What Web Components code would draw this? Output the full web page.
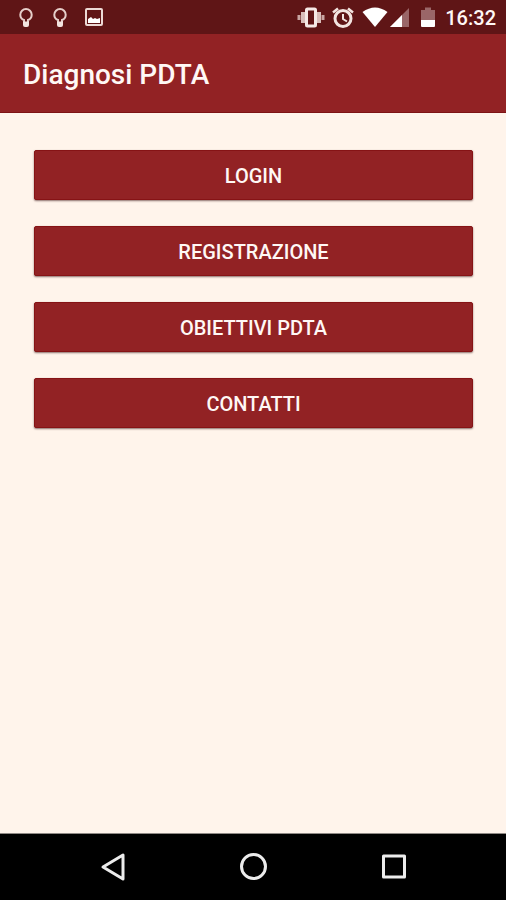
<!DOCTYPE html>
<html lang="it">
<head>
<meta charset="utf-8">
<meta name="viewport" content="width=device-width, initial-scale=1">
<title>Diagnosi PDTA</title>
<style>
  body {
    margin: 0;
    font-family: Roboto, "Liberation Sans", sans-serif;
    background: #fff4eb;
  }
</style>
</head>
<body>
<phone-screen>
  <status-bar slot="status" time="16:32"></status-bar>
  <app-bar slot="header">Diagnosi PDTA</app-bar>
  <menu-button>Login</menu-button>
  <menu-button>Registrazione</menu-button>
  <menu-button>Obiettivi PDTA</menu-button>
  <menu-button>Contatti</menu-button>
  <nav-bar slot="nav"></nav-bar>
</phone-screen>

<script>
const ICONS = {
  bulb: {
    width: 20,
    body: `<path d="M8 16.500v-2.500C5.500 13 4.300 11 4.300 8.700a5.700 5.700 0 0 1 11.400 0c0 2.300-1.200 4.300-3.700 5.300v2.500" fill="none" stroke="#e6cfca" stroke-width="2"/>
      <path d="M7 15.500h6V19q0 2-2 2H9q-2 0-2-2z" fill="#f3e4e0"/>`
  },
  picture: {
    width: 20,
    body: `<rect x="2" y="3" width="16" height="16" rx="1" fill="none" stroke="#ecd9d5" stroke-width="2"/>
      <path d="M4 17v-4l3-2 2 2 2-1 2 1 3-1v5z" fill="#fff"/>`
  },
  vibrate: {
    width: 28,
    body: `<rect x="9.500" y="3" width="9" height="17" rx="1" fill="none" stroke="#f6e9e6" stroke-width="3"/>
      <path d="M6 6v11M22 6v11" stroke="#d9bdb9" stroke-width="4"/>
      <path d="M2 9v5M26 9v5" stroke="#c9a5a2" stroke-width="3"/>`
  },
  alarm: {
    width: 24,
    body: `<circle cx="12" cy="12.500" r="8" fill="none" stroke="#f3e4e0" stroke-width="3"/>
      <path d="M2 6.500l5-4M22 6.500l-5-4" stroke="#f3e4e0" stroke-width="2.500"/>
      <path d="M12 8v5l4 2.500" fill="none" stroke="#f3e4e0" stroke-width="2"/>`
  },
  wifi: {
    width: 28,
    body: `<path d="M1.500 6Q14-3 26.500 6L14 21z" fill="#fff"/>`
  },
  signal: {
    width: 22,
    body: `<path d="M20 2v19H1z" fill="#9a6668"/><path d="M13 9v12H1z" fill="#fff"/>`
  },
  battery: {
    width: 22,
    body: `<path d="M4 4h4V1.500h6V4h4v10H4z" fill="#9a6668"/><path d="M4 14h14v6q0 1-1 1H5q-1 0-1-1z" fill="#fff"/>`
  }
};

class StatusIcon extends HTMLElement {
  constructor() {
    super();
    this.attachShadow({ mode: "open" });
  }
  connectedCallback() {
    const icon = ICONS[this.getAttribute("name")];
    this.shadowRoot.innerHTML = `
      <style>
        :host { display: block; flex: none; }
        svg { display: block; }
      </style>
      <svg width="${icon.width}" height="24" viewBox="0 0 ${icon.width} 24" aria-hidden="true">${icon.body}</svg>
    `;
  }
}

class StatusBar extends HTMLElement {
  constructor() {
    super();
    this.attachShadow({ mode: "open" });
  }
  connectedCallback() {
    this.shadowRoot.innerHTML = `
      <style>
        :host {
          display: flex;
          justify-content: space-between;
          align-items: center;
          box-sizing: border-box;
          height: 34px;
          padding: 2px 10px 0 16px;
          background: #5f1516;
          color: #fff8f5;
        }
        .notifications, .system, .network { display: flex; align-items: center; }
        .notifications { gap: 14px; }
        .system { gap: 6px; }
        time { font-size: 20px; line-height: 24px; font-weight: 500; }
      </style>
      <div class="notifications">
        <status-icon name="bulb"></status-icon>
        <status-icon name="bulb"></status-icon>
        <status-icon name="picture"></status-icon>
      </div>
      <div class="system">
        <status-icon name="vibrate"></status-icon>
        <status-icon name="alarm"></status-icon>
        <div class="network">
          <status-icon name="wifi"></status-icon>
          <status-icon name="signal"></status-icon>
        </div>
        <status-icon name="battery"></status-icon>
        <time>${this.getAttribute("time")}</time>
      </div>
    `;
  }
}

class AppBar extends HTMLElement {
  constructor() {
    super();
    this.attachShadow({ mode: "open" }).innerHTML = `
      <style>
        :host {
          display: flex;
          align-items: center;
          box-sizing: border-box;
          height: 79px;
          padding: 4px 23px 0;
          background: #922224;
          border-bottom: 1px solid #7d1315;
          color: #fff8f5;
        }
        h1 { margin: 0; font-size: 28px; line-height: 32px; font-weight: 500; }
      </style>
      <h1><slot></slot></h1>
    `;
  }
}

class MenuButton extends HTMLElement {
  constructor() {
    super();
    this.attachShadow({ mode: "open" }).innerHTML = `
      <style>
        :host { display: block; }
        button {
          display: block;
          width: 100%;
          height: 50px;
          padding: 2px 16px 0;
          border: 1px solid #861315;
          border-radius: 2px;
          background: #922224;
          box-shadow: 0 1px 2px rgba(60, 20, 20, 0.6);
          color: #fff8f5;
          font: 500 20px/24px Roboto, "Liberation Sans", sans-serif;
          text-transform: uppercase;
          cursor: pointer;
        }
        button:active { background: #7d1315; }
      </style>
      <button type="button"><slot></slot></button>
    `;
  }
}

class NavBar extends HTMLElement {
  constructor() {
    super();
    this.attachShadow({ mode: "open" }).innerHTML = `
      <style>
        :host { display: block; background: #000; border-top: 1px solid #8f8985; }
        nav { display: flex; height: 66px; padding: 0 42px; }
        button {
          flex: 1;
          display: flex;
          align-items: center;
          justify-content: center;
          padding: 0;
          border: 0;
          background: none;
          cursor: pointer;
        }
        svg { fill: none; stroke: #ececec; stroke-width: 3; stroke-linejoin: round; }
      </style>
      <nav>
        <button type="button" aria-label="Indietro">
          <svg width="32" height="32" viewBox="0 0 32 32"><path d="M27 4v24L7 16z"/></svg>
        </button>
        <button type="button" aria-label="Home">
          <svg width="32" height="32" viewBox="0 0 32 32"><circle cx="16.500" cy="15.500" r="12"/></svg>
        </button>
        <button type="button" aria-label="Recenti">
          <svg width="32" height="32" viewBox="0 0 32 32"><rect x="5.500" y="5" width="21" height="21"/></svg>
        </button>
      </nav>
    `;
  }
}

class PhoneScreen extends HTMLElement {
  constructor() {
    super();
    this.attachShadow({ mode: "open" }).innerHTML = `
      <style>
        :host { display: flex; flex-direction: column; min-height: 100vh; }
        main {
          flex: 1;
          display: flex;
          flex-direction: column;
          gap: 26px;
          padding: 37px 33px 37px 34px;
        }
      </style>
      <slot name="status"></slot>
      <slot name="header"></slot>
      <main><slot></slot></main>
      <slot name="nav"></slot>
    `;
  }
}

customElements.define("status-icon", StatusIcon);
customElements.define("status-bar", StatusBar);
customElements.define("app-bar", AppBar);
customElements.define("menu-button", MenuButton);
customElements.define("nav-bar", NavBar);
customElements.define("phone-screen", PhoneScreen);
</script>
</body>
</html>
